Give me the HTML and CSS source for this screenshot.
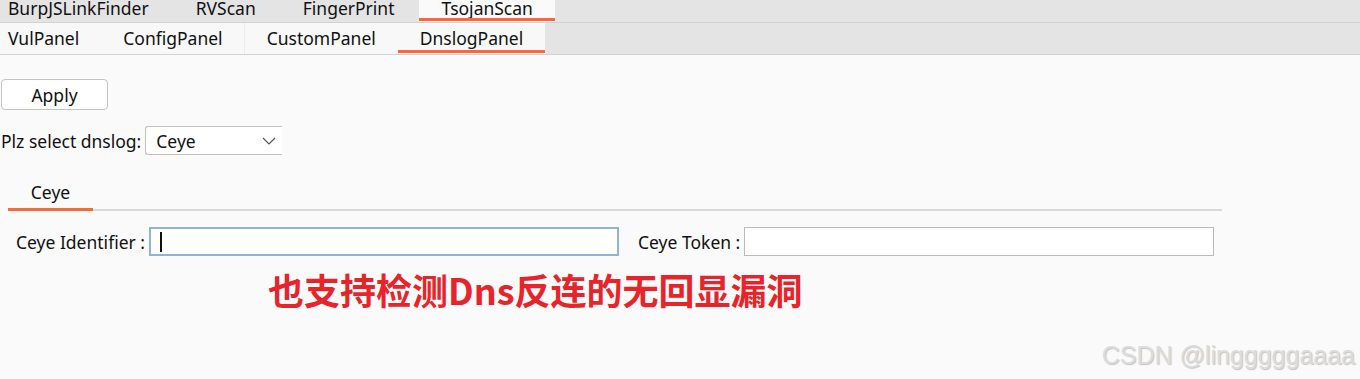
FILE: index.html
```html
<!DOCTYPE html>
<html lang="zh-CN">
<head>
    <meta charset="UTF-8">
    <title>TsojanScan - DnslogPanel</title>
    <link rel="stylesheet" href="styles.css">
</head>
<body>
    <nav class="tabs top">
        <a class="tab first">BurpJSLinkFinder</a>
        <a class="tab">RVScan</a>
        <a class="tab">FingerPrint</a>
        <a class="tab active">TsojanScan</a>
    </nav>

    <nav class="tabs sub">
        <a class="tab first">VulPanel</a>
        <a class="tab">ConfigPanel</a>
        <a class="tab">CustomPanel</a>
        <a class="tab active">DnslogPanel</a>
    </nav>

    <div class="content">
        <button class="btn">Apply</button>

        <div class="row select-row">
            <label for="dnslog">Plz select dnslog:</label>
            <div class="select">
                <span>Ceye</span>
                <svg width="14" height="8" viewBox="0 0 14 8"><path d="M1 1l6 6 6-6" fill="none" stroke="#555" stroke-width="1.2"/></svg>
            </div>
        </div>

        <div class="inner-tabs">
            <span class="inner-tab">Ceye</span>
        </div>

        <div class="row fields">
            <label>Ceye Identifier :</label>
            <div class="input focus"><span class="caret"></span></div>
            <label class="second">Ceye Token :</label>
            <div class="input"></div>
        </div>

        <p class="note">也支持检测Dns反连的无回显漏洞</p>
    </div>

    <div class="watermark">CSDN @lingggggaaaa</div>
</body>
</html>
```

FILE: styles.css
```css
body {
    margin: 0;
    background: #fafafa;
    font-family: "Noto Sans", "Noto Sans CJK SC", sans-serif;
    font-size: 17.5px;
    color: #111;
    height: 379px;
    overflow: hidden;
    position: relative;
}
.tabs {
    display: flex;
    background: #e4e4e4;
    border-bottom: 1px solid #d2d2d2;
}
.tab {
    display: block;
    padding: 0 22px;
    position: relative;
    white-space: nowrap;
}
.tab.first {
    margin-left: -14px;
}
.tab.active::after {
    content: "";
    position: absolute;
    left: 0;
    right: 0;
    bottom: 1px;
    height: 3px;
    background: #f9683a;
}
.top {
    height: 22px;
}
.top .tab {
    line-height: 16px;
    margin-right: 3px;
    height: 22px;
}
.top .tab.active {
    background: #fafafa;
}
.sub {
    height: 31px;
}
.sub .tab {
    line-height: 31px;
    background: #f8f8f8;
}
.sub .tab:nth-child(2) {
    box-shadow: inset -1px 0 0 #ececec;
}
.content {
    padding: 24px 0 0 1px;
}
.btn {
    display: block;
    width: 107px;
    height: 31px;
    background: #fff;
    border: 1px solid #c4c4c4;
    border-radius: 4px;
    font: inherit;
    color: #111;
    padding: 0;
}
.row {
    display: flex;
    align-items: center;
}
.select-row {
    margin-top: 16px;
}
.select-row label {
    margin-right: 4px;
}
.select {
    width: 120px;
    height: 27px;
    border: 1px solid #c0c0c0;
    border-right: none;
    border-radius: 3px 0 0 3px;
    background: #fff;
    display: flex;
    align-items: center;
    justify-content: space-between;
    padding: 0 6px 0 10px;
}
.inner-tabs {
    margin: 25px 0 0 7px;
    width: 1214px;
    border-bottom: 2px solid #dadada;
    display: flex;
}
.inner-tab {
    display: block;
    width: 85px;
    text-align: center;
    padding: 0 0 4px 0;
    border-bottom: 3px solid #f9683a;
    margin-bottom: -2px;
}
.fields {
    margin-top: 16px;
    padding-left: 15px;
}
.fields label {
    margin-right: 4px;
}
.fields label.second {
    margin-left: 19px;
}
.input {
    width: 468px;
    height: 27px;
    border: 1px solid #bdb9bd;
    background: #fff;
    display: flex;
    align-items: center;
}
.input.focus {
    border: 2px solid #8fb3e0;
    width: 466px;
    height: 25px;
}
.caret {
    display: block;
    width: 2px;
    height: 20px;
    background: #111;
    margin-left: 9px;
}
.note {
    margin: 11px 0 0 267px;
    color: #e8242a;
    font-family: "Noto Sans CJK SC", sans-serif;
    font-weight: bold;
    font-size: 36px;
    line-height: 44px;
}
.watermark {
    position: absolute;
    right: 5px;
    bottom: 9px;
    font-family: "Liberation Sans", sans-serif;
    font-size: 25px;
    color: #dcdcdc;
    text-shadow: 1px 1px 1px #c4c4c4;
}
```
